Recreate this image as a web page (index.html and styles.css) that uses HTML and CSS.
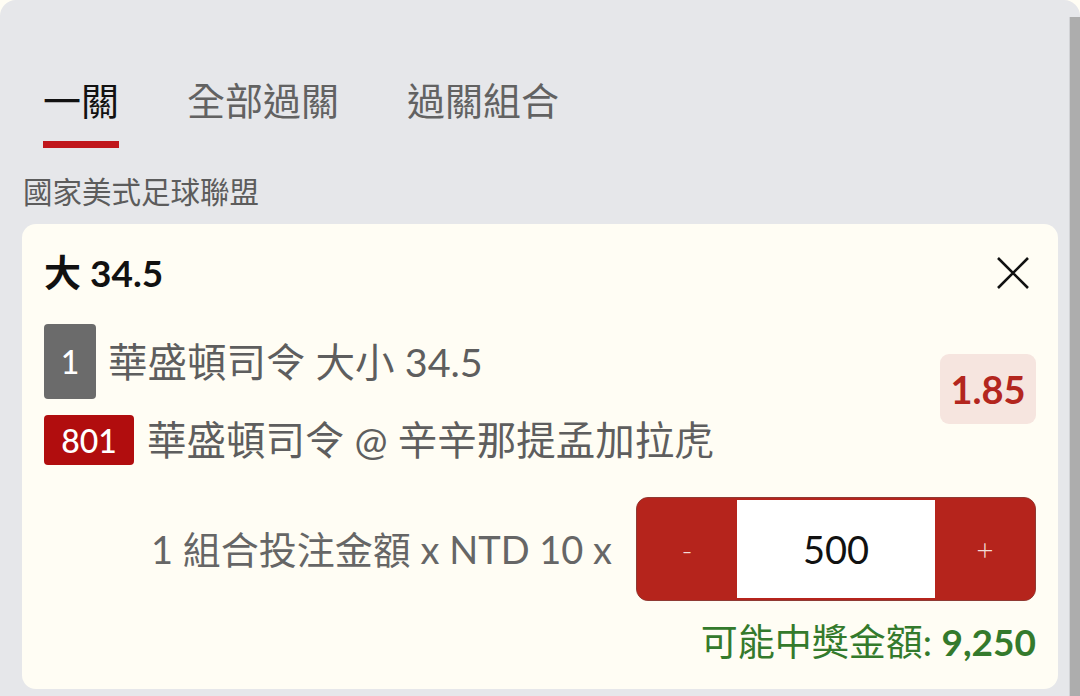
FILE: index.html
```html
<!DOCTYPE html>
<html lang="zh-Hant">
<head>
  <meta charset="UTF-8">
  <title>投注單</title>
  <link rel="stylesheet" href="styles.css">
</head>
<body>
  <div class="painel">
    <div class="rolagem"></div>

    <nav class="abas">
      <span class="aba ativa">一關</span>
      <span class="aba">全部過關</span>
      <span class="aba">過關組合</span>
    </nav>

    <div class="liga">國家美式足球聯盟</div>

    <div class="cartao">
      <div class="topo">
        <span class="titulo">大 34.5</span>
        <svg class="fechar" width="34" height="34" viewBox="0 0 34 34">
          <path d="M2 2 L32 32 M32 2 L2 32" stroke="#111" stroke-width="2.6" fill="none"/>
        </svg>
      </div>

      <div class="selecao">
        <div class="linhas">
          <div class="linha">
            <span class="selo cinza">1</span>
            <span class="texto">華盛頓司令 大小 34.5</span>
          </div>
          <div class="linha segunda">
            <span class="selo vermelho">801</span>
            <span class="texto">華盛頓司令 @ 辛辛那提孟加拉虎</span>
          </div>
        </div>
        <div class="odd">1.85</div>
      </div>

      <div class="aposta">
        <span class="rotulo">1 組合投注金額 x NTD 10 x</span>
        <div class="stepper">
          <button class="passo">-</button>
          <input class="valor" type="text" value="500">
          <button class="passo">+</button>
        </div>
      </div>

      <div class="premio">可能中獎金額: <b>9,250</b></div>
    </div>
  </div>
</body>
</html>
```

FILE: styles.css
```css
* {
  box-sizing: border-box;
}

body {
  margin: 0;
  background: #fffdf4;
  font-family: Lato, "Noto Sans CJK TC", sans-serif;
  overflow: hidden;
}

.painel {
  position: relative;
  height: 696px;
  background: #e6e7ea;
  border-radius: 16px 16px 0 0;
  padding-top: 72px;
}

.rolagem {
  position: absolute;
  top: 17px;
  right: 0;
  bottom: 0;
  width: 11px;
  background: #adadad;
  border-left: 1px solid #d2d3d6;
}

.abas {
  display: flex;
  gap: 68px;
  padding-left: 43px;
}

.aba {
  font-size: 38px;
  line-height: 56px;
  color: #626262;
  padding-bottom: 13px;
  border-bottom: 7px solid transparent;
}

.aba.ativa {
  color: #121212;
  border-bottom-color: #c0161b;
}

.liga {
  font-size: 29.5px;
  line-height: 40px;
  color: #5c5c5c;
  padding: 24px 0 0 23px;
}

.cartao {
  margin: 12px 22px 0;
  background: #fffdf4;
  border-radius: 14px;
  padding: 24px 22px 22px;
  height: 465px;
}

.topo {
  display: flex;
  justify-content: space-between;
  align-items: center;
}

.titulo {
  font-size: 37px;
  font-weight: bold;
  color: #111;
  line-height: 50px;
}

.fechar {
  margin-right: 6px;
}

.selecao {
  display: flex;
  align-items: center;
  justify-content: space-between;
  margin-top: 26px;
}

.linha {
  display: flex;
  align-items: center;
  gap: 12px;
}

.linha.segunda {
  margin-top: 16px;
  gap: 13px;
}

.selo {
  display: flex;
  align-items: center;
  justify-content: center;
  color: #fff;
  font-size: 32px;
  font-weight: 500;
  border-radius: 4px;
}

.cinza {
  width: 52px;
  height: 75px;
  background: #6b6b6b;
}

.vermelho {
  width: 90px;
  height: 50px;
  background: #b10d0e;
}

.texto {
  font-size: 39.5px;
  line-height: 48px;
  color: #5e5e5e;
}

.odd {
  background: #f6e5df;
  color: #b3261e;
  font-weight: bold;
  font-size: 38px;
  width: 96px;
  height: 70px;
  border-radius: 9px;
  display: flex;
  align-items: center;
  justify-content: center;
  margin-bottom: 12px;
}

.aposta {
  display: flex;
  justify-content: flex-end;
  align-items: center;
  gap: 24px;
  margin-top: 32px;
}

.rotulo {
  font-size: 38px;
  line-height: 46px;
  color: #666;
}

.stepper {
  display: flex;
  width: 400px;
  height: 104px;
  background: #b5241c;
  border: 1px solid #8f3a33;
  border-radius: 12px;
  overflow: hidden;
}

.passo {
  width: 100px;
  border: none;
  background: #b5241c;
  color: #f4dcd8;
  font-size: 30px;
  font-family: inherit;
  font-weight: 300;
}

.valor {
  width: 198px;
  border: none;
  border-top: 2px solid #b5241c;
  border-bottom: 2px solid #b5241c;
  background: #fff;
  text-align: center;
  font-size: 38px;
  font-family: inherit;
  color: #111;
  outline: none;
}

.premio {
  text-align: right;
  font-size: 37px;
  line-height: 46px;
  color: #347a2c;
  margin-top: 18px;
}

.premio b {
  font-weight: bold;
}
```
